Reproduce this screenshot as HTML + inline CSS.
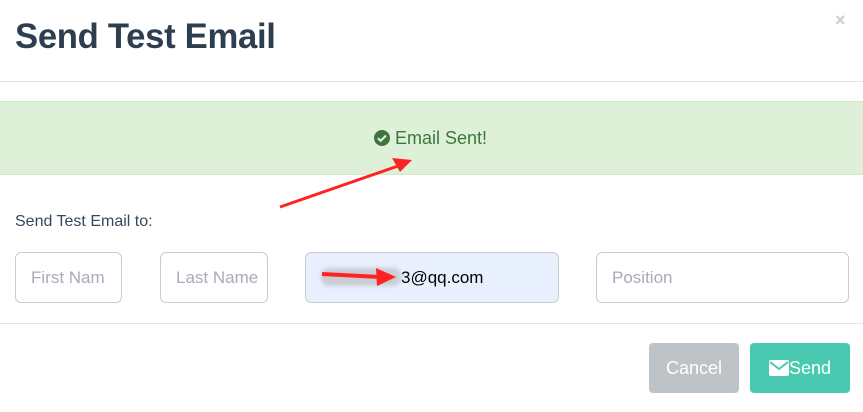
<!DOCTYPE html>
<html><head><style>
body{margin:0;width:863px;height:412px;background:#fff;font-family:"Liberation Sans",sans-serif;position:relative;overflow:hidden}
.a{position:absolute}
h1{position:absolute;left:15px;top:17px;margin:0;font-size:35px;font-weight:bold;color:#2c3e50;letter-spacing:-0.3px;transform:scaleX(0.99);transform-origin:left}
.inp{position:absolute;top:252px;height:51px;border:1px solid #ccc;border-radius:6px;box-sizing:border-box;font-size:17px;color:#aab;line-height:49px;padding-left:15px;overflow:hidden;white-space:nowrap}
.btn{position:absolute;top:343px;height:50px;border-radius:4px;color:#fff;font-size:18px;line-height:50px;text-align:center}
</style></head><body>
<h1>Send Test Email</h1>
<div class="a" style="left:835px;top:10px;color:#ccc;font-size:18px;font-weight:bold">×</div>
<div class="a" style="left:0;top:81px;width:863px;height:1px;background:#e5e5e5"></div>
<div class="a" style="left:0;top:101px;width:863px;height:74px;background:#dff0d8;border-top:1px solid #d0e9c6;border-bottom:1px solid #d0e9c6;box-sizing:border-box"></div>
<div class="a" style="left:374px;top:127px;font-size:18px;color:#3c763d;line-height:22px">
<svg width="16" height="16" viewBox="0 0 16 16" style="vertical-align:-2px"><circle cx="8" cy="8" r="8" fill="#3c763d"/><path d="M4 8.2l2.7 2.6L12 5.5" stroke="#dff0d8" stroke-width="2.2" fill="none"/></svg> Email Sent!</div>
<div class="a" style="left:15px;top:213px;font-size:16px;color:#34495e">Send Test Email to:</div>
<div class="inp" style="left:15px;width:107px">First Nam</div>
<div class="inp" style="left:160px;width:108px">Last Name</div>
<div class="inp" style="left:305px;width:254px;background:#e8f0fe;color:#000;">
<span style="display:inline-block;width:80px;height:18px;background:#c8ccd4;border-radius:8px;vertical-align:-3px;filter:blur(2px)"></span>3@qq.com</div>
<div class="inp" style="left:596px;width:253px">Position</div>
<div class="a" style="left:0;top:323px;width:863px;height:1px;background:#e5e5e5"></div>
<div class="btn" style="left:649px;width:90px;background:#bdc3c7">Cancel</div>
<div class="btn" style="left:750px;width:100px;background:#48c9b0">
<svg width="20" height="16" viewBox="0 0 20 16" style="vertical-align:-2px"><rect x="0" y="0" width="20" height="16" rx="2" fill="#fff"/><path d="M1 2l9 7 9-7" stroke="#48c9b0" stroke-width="2" fill="none"/></svg>Send</div>
<svg class="a" style="left:0;top:0" width="863" height="412">
<path d="M280 207L398 166" stroke="#f22" stroke-width="3"/>
<path d="M412 160L392 158L400 172Z" fill="#f22"/>
<path d="M322 274L380 277" stroke="#f22" stroke-width="4"/>
<path d="M396 277L376 268L377 286Z" fill="#f22"/>
</svg>
</body></html>
